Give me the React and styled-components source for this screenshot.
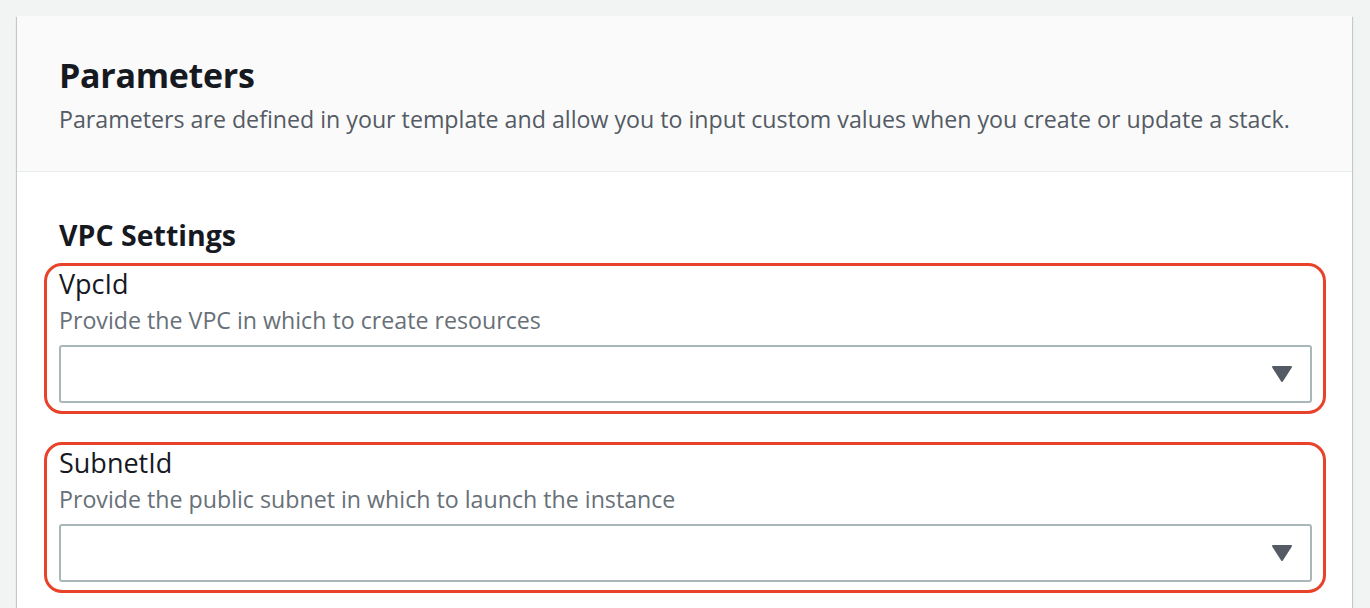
import React from 'react'
import styled, { createGlobalStyle } from 'styled-components'

const GlobalStyle = createGlobalStyle`
  html, body {
    margin: 0;
    padding: 0;
    background: #f2f3f3;
    font-family: "Open Sans", Arial, sans-serif;
    color: #16191f;
  }
`

const Page = styled.div`
  padding: 16px 18px 0 17px;
  height: 608px;
  box-sizing: border-box;
  overflow: hidden;
`

const Card = styled.section`
  background: #ffffff;
  box-shadow: 0 1px 1px 0 rgba(0, 28, 36, 0.3), 1px 1px 1px 0 rgba(0, 28, 36, 0.15),
    -1px 1px 1px 0 rgba(0, 28, 36, 0.15);
  min-height: 700px;
`

const Header = styled.header`
  background: #fafafa;
  border-bottom: 1px solid #eaeded;
  padding: 37px 42px 38px 42px;
`

const Title = styled.h2`
  margin: 0;
  font-size: 34px;
  line-height: 44px;
  font-weight: 700;
  letter-spacing: -0.3px;
  color: #16191f;
`

const Description = styled.p`
  margin: ${p => p.$gap || 0}px 0 0;
  font-size: 23.2px;
  line-height: 28px;
  color: ${p => p.$muted ? '#687078' : '#545b64'};
`

const Body = styled.div`
  padding: 47px 26px 0 27px;
  display: flex;
  flex-direction: column;
`

const SectionTitle = styled.h3`
  margin: 0 0 12px 15px;
  font-size: 28.5px;
  line-height: 32px;
  font-weight: 700;
  color: #16191f;
`

const Highlight = styled.div`
  border: 3px solid #e8432a;
  border-radius: 18px;
  padding: 3px 11px 8px 12px;
  margin-bottom: 28px;
  display: flex;
  flex-direction: column;
`

const Label = styled.label`
  font-size: 27px;
  line-height: 30px;
  color: #16191f;
`

const Select = styled.div`
  margin-top: 11px;
  height: 58px;
  border: 2px solid #aab7b8;
  border-radius: 3px;
  box-sizing: border-box;
  display: flex;
  align-items: center;
  justify-content: flex-end;
  padding-right: 17px;
  background: #fff;
`

const Caret = () => (
  <svg width="22" height="18" viewBox="0 0 22 18">
    <path d="M2 2 L20 2 L11 16 Z" fill="#545b64" stroke="#545b64" strokeWidth="2" strokeLinejoin="round" />
  </svg>
)

const fields = [
  { name: 'VpcId', hint: 'Provide the VPC in which to create resources' },
  { name: 'SubnetId', hint: 'Provide the public subnet in which to launch the instance' },
]

export default function App() {
  return (
    <>
      <GlobalStyle />
      <Page>
        <Card>
          <Header>
            <Title>Parameters</Title>
            <Description $gap={8}>
              Parameters are defined in your template and allow you to input custom values when you create or update a stack.
            </Description>
          </Header>
          <Body>
            <SectionTitle>VPC Settings</SectionTitle>
            {fields.map(f => (
              <Highlight key={f.name}>
                <Label>{f.name}</Label>
                <Description $gap={7} $muted>{f.hint}</Description>
                <Select>
                  <Caret />
                </Select>
              </Highlight>
            ))}
          </Body>
        </Card>
      </Page>
    </>
  )
}
